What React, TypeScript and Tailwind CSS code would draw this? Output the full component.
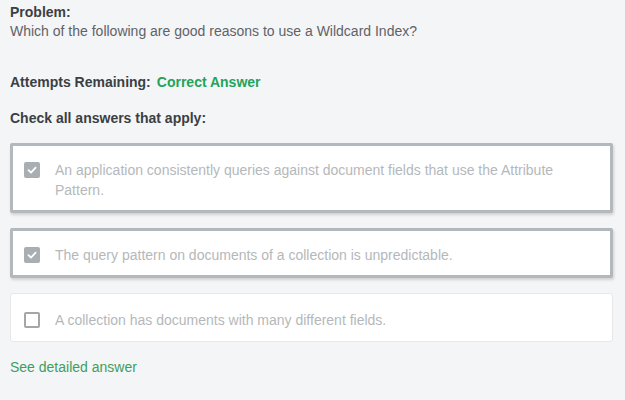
import React from "react";

const Check = () => (
  <svg width="12" height="12" viewBox="0 0 12 12" fill="none">
    <path d="M2.5 6.2 L5 8.6 L9.6 3.6" stroke="#ffffff" strokeWidth="1.8" strokeLinecap="round" strokeLinejoin="round" />
  </svg>
);

function Option({ text, checked }: { text: string; checked: boolean }) {
  return (
    <div
      className={
        checked
          ? "flex items-start bg-white border-[3px] border-[#b3b8bd] rounded-[2px] shadow-[1px_2px_3px_rgba(0,0,0,0.15)] pl-[11px] pr-[24px] pt-[14px] pb-[10px]"
          : "flex items-start bg-white border border-[#e6e8ea] rounded-[3px] pl-[13px] pr-[26px] pt-[16px] pb-[11px]"
      }
    >
      {checked ? (
        <div className="w-4 h-4 mt-[2px] shrink-0 rounded-[2px] bg-[#a9aeb3] flex items-center justify-center">
          <Check />
        </div>
      ) : (
        <div className="w-4 h-4 mt-[2px] shrink-0 rounded-[2px] border-2 border-[#a6a6a6] bg-white" />
      )}
      <div className="ml-[15px] text-[14px] leading-[20px] text-[#b5b8bb]">{text}</div>
    </div>
  );
}

export default function App() {
  return (
    <div
      className="w-[625px] h-[400px] bg-[#f4f5f7] px-[10px] pt-[3px]"
      style={{ fontFamily: '"Liberation Sans", Arial, sans-serif' }}
    >
      <div className="text-[14px] leading-[18px] font-bold text-[#3b3f44]">Problem:</div>
      <div className="text-[14px] leading-[20px] text-[#5f6368]">
        Which of the following are good reasons to use a Wildcard Index?
      </div>
      <div className="mt-[32px] flex text-[14px] leading-[18px] font-bold">
        <span className="text-[#3b3f44]">Attempts Remaining:</span>
        <span className="ml-[6px] text-[#22a35a]">Correct Answer</span>
      </div>
      <div className="mt-[18px] text-[14px] leading-[18px] font-bold text-[#3b3f44]">
        Check all answers that apply:
      </div>
      <div className="mt-[16px] w-[603px] flex flex-col gap-[15px]">
        <Option
          checked
          text="An application consistently queries against document fields that use the Attribute Pattern."
        />
        <Option checked text="The query pattern on documents of a collection is unpredictable." />
        <Option checked={false} text="A collection has documents with many different fields." />
      </div>
      <div className="mt-[15px] text-[14px] leading-[20px] text-[#3f9e5f]">See detailed answer</div>
    </div>
  );
}
